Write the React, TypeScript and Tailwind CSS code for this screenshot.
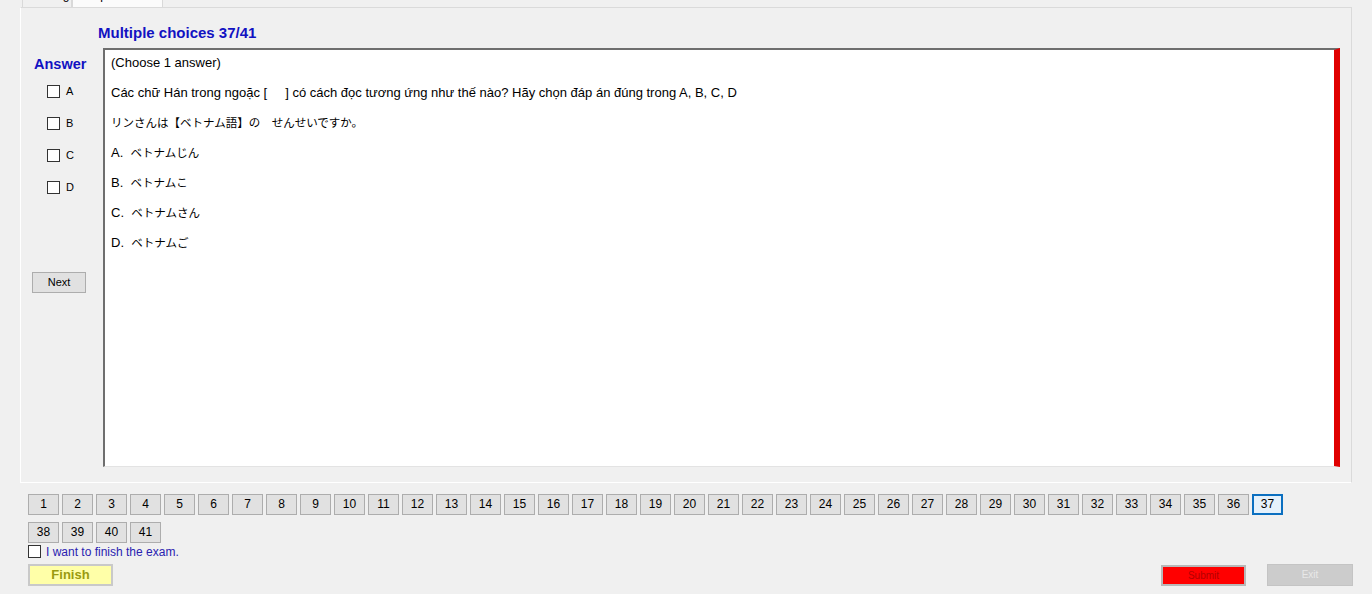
const questionLines: { prefix?: string, text: string, jp?: boolean }[] = [
    { text: "(Choose 1 answer)" },
    { text: "Các chữ Hán trong ngoặc [     ] có cách đọc tương ứng như thế nào? Hãy chọn đáp án đúng trong A, B, C, D" },
    { text: "リンさんは【ベトナム語】の　せんせいですか。", jp: true },
    { prefix: "A.  ", text: "ベトナムじん", jp: true },
    { prefix: "B.  ", text: "ベトナムこ", jp: true },
    { prefix: "C.  ", text: "ベトナムさん", jp: true },
    { prefix: "D.  ", text: "ベトナムご", jp: true },
]

const choices = ["A", "B", "C", "D"]

const pages: number[] = Array.from({ length: 41 }, (_, i) => i + 1)

function Box() {
    return <span className="inline-block w-[13px] h-[13px] bg-white border border-[#333333] shrink-0" />
}

export default function App() {
    return (
        <div className="w-[1372px] h-[594px] bg-[#f0f0f0] overflow-hidden text-black" style={{ fontFamily: '"Liberation Sans", "Noto Sans CJK JP", sans-serif' }}>

            {/* tabs, mostly scrolled out of view */}
            <div className="h-[7px] overflow-hidden pl-[22px] flex items-end">
                <div className="h-[20px] w-[50px] bg-[#f0f0f0] border border-[#d9d9d9] border-b-0 flex items-end justify-center text-[12px] leading-[14px] pb-[5px]">Reading</div>
                <div className="h-[21px] w-[91px] bg-[#fbfbfb] border border-[#d9d9d9] border-b-0 flex items-end justify-center text-[12px] leading-[14px] pb-[5px]">Multiple choices</div>
            </div>

            {/* tab panel */}
            <div className="ml-[20px] w-[1332px] h-[476px] border border-[#dadada] border-l-white border-b-white bg-[#f0f0f0] flex flex-col">
                <div className="pl-[77px] pt-[16px] mb-[6px] text-[15px] leading-[18px] font-bold text-[#1212c2]">Multiple choices 37/41</div>

                <div className="flex">
                    <div className="w-[82px] flex flex-col">
                        <div className="pl-[13px] pt-[7px] text-[14.5px] leading-[18px] font-bold text-[#1212c2]">Answer</div>
                        <div className="flex flex-col gap-[19px] pt-[12px] pl-[26px]">
                            {choices.map((c) => (
                                <div key={c} className="flex items-center gap-[6px] h-[13px]">
                                    <Box />
                                    <span className="text-[11px] leading-[13px]">{c}</span>
                                </div>
                            ))}
                        </div>
                        <button className="ml-[11px] mt-[78px] w-[54px] h-[21px] bg-[#e1e1e1] border border-[#adadad] text-[11px] leading-[19px]">Next</button>
                    </div>

                    <div className="w-[1237px] h-[419px] bg-white border-l-2 border-t-2 border-l-[#6e6e6e] border-t-[#6e6e6e] border-b border-b-[#e3e3e3] border-r-[6px] border-r-[#e00000] pl-[6px]">
                        <div className="-mt-[2px] leading-[30px] whitespace-pre">
                            {questionLines.map((line, index) => (
                                <div key={index} className="h-[30px] text-[13px]">
                                    {line.prefix && <span>{line.prefix}</span>}
                                    <span className={line.jp ? "text-[11.5px]" : ""}>{line.text}</span>
                                </div>
                            ))}
                        </div>
                    </div>
                </div>
            </div>

            {/* question number buttons */}
            <div className="ml-[28px] mt-[11px] w-[1258px] flex flex-wrap gap-x-[3px] gap-y-[7px]">
                {pages.map((p) => (
                    <button
                        key={p}
                        className={p === 37
                            ? "w-[31px] h-[21px] bg-[#e5f1fb] border-2 border-[#0b6fc0] text-[12px] leading-[17px]"
                            : "w-[31px] h-[21px] bg-[#e1e1e1] border border-[#adadad] text-[12px] leading-[19px]"}
                    >
                        {p}
                    </button>
                ))}
            </div>

            <div className="ml-[28px] mt-[2px] flex items-center gap-[5px] h-[13px]">
                <Box />
                <span className="text-[12px] leading-[14px] text-[#2a22b0]">I want to finish the exam.</span>
            </div>

            <div className="mt-[6px] pl-[28px] pr-[19px] flex items-start">
                <button className="w-[85px] h-[22px] bg-[#ffffa8] border-2 border-[#c9c9c9] text-[13px] leading-[18px] font-bold text-[#9a9a10]">Finish</button>
                <button className="ml-auto mt-[1px] w-[85px] h-[21px] bg-[#ff0000] border-2 border-[#b8b8b8] text-[10px] leading-[17px] text-[#b40000]">Submit</button>
                <button className="ml-[21px] w-[86px] h-[22px] bg-[#cccccc] border border-[#c4c4c4] text-[10px] leading-[20px] text-[#e8e8e8]">Exit</button>
            </div>
        </div>
    )
}
